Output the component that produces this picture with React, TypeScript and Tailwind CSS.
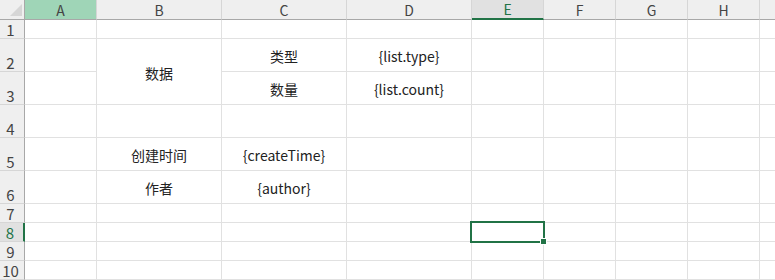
import React from "react";

const cols = ["A", "B", "C", "D", "E", "F", "G", "H", "I"];
const rowHeights = [19, 33, 33, 33, 33, 33, 19, 19, 19, 19];

// cell content keyed by "col+row"
const cells: Record<string, string> = {
  C2: "类型",
  D2: "{list.type}",
  C3: "数量",
  D3: "{list.count}",
  B5: "创建时间",
  C5: "{createTime}",
  B6: "作者",
  C6: "{author}",
};

const font = { fontFamily: '"Noto Sans CJK SC", "Noto Sans", sans-serif' };

export default function App() {
  return (
    <div className="w-[775px] h-[280px] overflow-hidden bg-white relative" style={font}>
      <div className="grid grid-cols-[25px_72px_125px_125px_125px_72px_72px_72px_72px_72px] grid-rows-[20px_19px_33px_33px_33px_33px_33px_19px_19px_19px_19px]">
        {/* corner */}
        <div className="bg-[#efefef] border-r border-b border-[#a8a8a8] flex items-end justify-end pr-[2px] pb-[3px]">
          <svg width="12" height="12" viewBox="0 0 12 12">
            <polygon points="12,0 12,12 0,12" fill="#d6d6d6" />
          </svg>
        </div>
        {/* column headers */}
        {cols.map((c) => (
          <div
            key={c}
            className={
              "flex items-center justify-center text-[14px] leading-none border-r border-[#d6d6d6] " +
              (c === "A"
                ? "bg-[#9fd5b7] text-[#444] border-b border-b-[#a8a8a8]"
                : c === "E"
                ? "bg-[#e1e1e1] text-[#217346] border-b-[2px] border-b-[#217346]"
                : "bg-[#efefef] text-[#444] border-b border-b-[#a8a8a8]")
            }
          >
            {/* last column is only partly visible, its letter lies off screen */}
            {c === "I" ? "" : c}
          </div>
        ))}

        {rowHeights.map((h, ri) => {
          const r = ri + 1;
          return (
            <React.Fragment key={r}>
              <div
                className={
                  "flex items-end justify-center pr-[3px] text-[15px] leading-none pb-[1px] border-b border-[#d6d6d6] " +
                  (r === 8
                    ? "bg-[#e1e1e1] text-[#217346] border-r-[2px] border-r-[#217346]"
                    : "bg-[#efefef] text-[#444] border-r border-r-[#a8a8a8]")
                }
              >
                {r}
              </div>
              {cols.map((c) => {
                const key = c + r;
                if (c === "B" && r === 3) return null;
                if (c === "B" && r === 2) {
                  return (
                    <div
                      key={key}
                      className="row-span-2 border-r border-b border-[#e1e1e1] flex items-center justify-center pt-[3px] text-[14px] text-[#222]"
                    >
                      数据
                    </div>
                  );
                }
                return (
                  <div
                    key={key}
                    className="relative border-r border-b border-[#e1e1e1] flex items-center justify-center pt-[3px] text-[14px] text-[#222] whitespace-nowrap"
                  >
                    {cells[key]}
                    {key === "E8" && (
                      <div className="absolute left-[-2px] top-[-2px] w-[75px] h-[22px] border-2 border-[#217346] z-10">
                        <div className="absolute left-[68px] top-[15px] w-[7px] h-[7px] bg-[#217346] border border-white" />
                      </div>
                    )}
                  </div>
                );
              })}
            </React.Fragment>
          );
        })}
      </div>
    </div>
  );
}
